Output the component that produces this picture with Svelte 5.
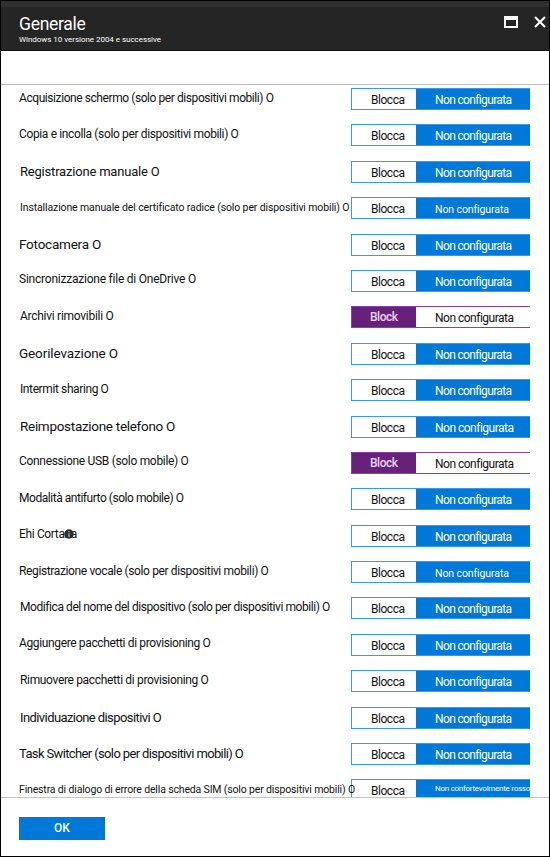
<script>
  const rows = [
    { label: 'Acquisizione schermo (solo per dispositivi mobili) O', size: 12, width: 254.5 },
    { label: 'Copia e incolla (solo per dispositivi mobili) O', size: 12, width: 219.5 },
    { label: 'Registrazione manuale O', size: 13, width: 139.5, inset: true },
    { label: 'Installazione manuale del certificato radice (solo per dispositivi mobili) O', size: 11, width: 329, inset: true, small: true },
    { label: 'Fotocamera O', size: 14, width: 82 },
    { label: 'Sincronizzazione file di OneDrive O', size: 12, width: 176.5 },
    { label: 'Archivi rimovibili O', size: 12, width: 93.5, inset: true, blocked: true },
    { label: 'Georilevazione O', size: 14, width: 99 },
    { label: 'Intermit sharing O', size: 12, width: 88.5, inset: true },
    { label: 'Reimpostazione telefono O', size: 14, width: 155, inset: true, wide: true },
    { label: 'Connessione USB (solo mobile) O', size: 12, width: 169.5, blocked: true },
    { label: 'Modalità antifurto (solo mobile) O', size: 12, width: 164.5 },
    { label: 'Ehi Cortana', size: 12, width: 58, info: true },
    { label: 'Registrazione vocale (solo per dispositivi mobili) O', size: 12, width: 249.5, small: true },
    { label: 'Modifica del nome del dispositivo (solo per dispositivi mobili) O', size: 12, width: 309.5, inset: true },
    { label: 'Aggiungere pacchetti di provisioning O', size: 12, width: 191.5 },
    { label: 'Rimuovere pacchetti di provisioning O', size: 12, width: 188.5, inset: true },
    { label: 'Individuazione dispositivi O', size: 13, width: 141, inset: true },
    { label: 'Task Switcher (solo per dispositivi mobili) O', size: 13, width: 224 },
    { label: 'Finestra di dialogo di errore della scheda SIM (solo per dispositivi mobili) O', size: 11, width: 336, other: 'Non confortevolmente rosso' }
  ];

  // Tracks the text so that it fills the given width.
  function fit(node, width) {
    const natural = node.getBoundingClientRect().width;
    node.style.letterSpacing = `${(width - natural) / node.textContent.length}px`;
  }
</script>

<div class="blade">
  <header>
    <div class="titles">
      <h1><span use:fit={66.5}>Generale</span></h1>
      <p><span use:fit={142}>Windows 10 versione 2004 e successive</span></p>
    </div>
    <div class="actions">
      <svg width="14" height="12" viewBox="0 0 14 12"><path d="M0 0H14V12H0ZM2 4V10H12V4Z" fill="#fff" fill-rule="evenodd" /></svg>
      <svg width="12" height="12" viewBox="0 0 12 12"><path d="M1 1L11 11M11 1L1 11" stroke="#fff" stroke-width="2" fill="none" /></svg>
    </div>
  </header>
  <div class="strip"></div>
  <main>
    {#each rows as row}
      <div class="row">
        <div class="label s{row.size}" class:inset={row.inset}>
          <span use:fit={row.width}>{row.label}</span>
          {#if row.info}
            <svg class="info" width="10" height="10" viewBox="0 0 10 10"><circle cx="5" cy="5" r="4.7" fill="#2b2f33" /><path d="M5 4.2V8M5 2V3.2" stroke="#bbb" stroke-width="1.2" /></svg>
          {/if}
        </div>
        <div class="toggle" class:blocked={row.blocked}>
          <div class="block">
            {#if row.blocked}<span use:fit={27.5}>Block</span>{:else}<span use:fit={33.5}>Blocca</span>{/if}
          </div>
          <div class="none" class:small={row.small} class:tiny={row.other}>
            {#if row.other}<span use:fit={95}>{row.other}</span>
            {:else if row.small}<span use:fit={73.5}>Non configurata</span>
            {:else}<span use:fit={row.blocked || row.wide ? 78 : 76}>Non configurata</span>{/if}
          </div>
        </div>
      </div>
    {/each}
  </main>
  <footer><button><span use:fit={16}>OK</span></button></footer>
</div>

<style>
  .blade {
    box-sizing: border-box;
    width: 550px;
    height: 857px;
    border: 1px solid #000;
    background: #fff;
    display: flex;
    flex-direction: column;
    font-family: Roboto, 'Liberation Sans', sans-serif;
    color: #111;
    overflow: hidden;
  }
  span { white-space: pre; }
  header {
    box-sizing: border-box;
    height: 50px;
    flex: none;
    background: #252525;
    border-top: 6px solid #303030;
    border-bottom: 1px solid #111;
    display: flex;
    justify-content: space-between;
    padding: 8px 3px 0 18px;
    color: #fff;
  }
  h1 { margin: 0; font-size: 17.5px; font-weight: 400; line-height: 18px; }
  p { margin: 2px 0 0; font-size: 8px; line-height: 10px; }
  .actions { display: flex; gap: 16px; padding-top: 1px; }
  .strip { height: 33px; flex: none; border-bottom: 1px solid #bcbcbc; }
  main { flex: none; height: 712px; padding: 3px 0 0 18px; box-sizing: border-box; overflow: hidden; }
  .row { height: 36.4px; display: grid; grid-template-columns: 332px 179px; align-items: start; }
  .label { position: relative; line-height: 16px; white-space: pre; padding-top: 1px; z-index: 1; }
  .inset { padding-left: 1px; }
  .s11 { font-size: 10.5px; padding-top: 3px; }
  .s12 { font-size: 12px; padding-top: 1.5px; }
  .s13 { font-size: 13px; padding-top: 3px; }
  .s14 { font-size: 13.5px; padding-top: 2px; }
  .info { position: absolute; left: 45px; top: 4px; }
  .toggle {
    box-sizing: border-box;
    width: 179px;
    height: 22px;
    display: flex;
    border: 1px solid #3d98e2;
    border-right: 0;
    font-size: 12px;
    line-height: 14px;
    overflow: hidden;
  }
  .block { width: 64px; box-sizing: border-box; padding: 4px 0 0 19px; flex: none; }
  .none { flex: 1; background: #0078d7; color: #fff; padding: 4px 0 0 19px; overflow: hidden; }
  .small { font-size: 10.5px; padding-top: 5px; }
  .tiny { font-size: 8px; padding-top: 2px; }
  .blocked { border-color: #85459a; }
  .blocked .block { background: #68217a; color: #e6d5eb; font-weight: 500; padding: 3px 0 0 18px; }
  .blocked .none { background: #fff; color: #111; }
  footer { flex: 1; border-top: 1px solid #c4c4c4; padding: 19px 18px; }
  button {
    width: 86px;
    height: 23px;
    display: block;
    border: 0;
    padding: 0;
    background: #0078d7;
    color: #fff;
    font: 500 12px/23px Roboto, sans-serif;
  }
</style>
